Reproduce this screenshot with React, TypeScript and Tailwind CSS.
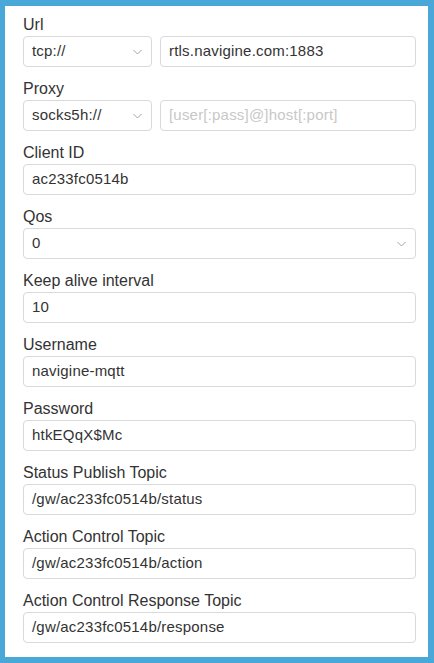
const font = { fontFamily: '"Liberation Sans", Arial, sans-serif' };

function Chevron() {
	return (
		<svg width="9" height="5" viewBox="0 0 9 5" className="absolute right-[9px] top-1/2 -translate-y-1/2" fill="none">
			<path d="M0.5 0.5 L4.5 4.5 L8.5 0.5" stroke="#a3a3a3" strokeWidth="1" />
		</svg>
	);
}

function Select({ value, className = "" }: { value: string; className?: string }) {
	return (
		<div
			className={`relative h-[31px] rounded-[4px] border border-[#d9d9d9] bg-white pl-[8px] flex items-center text-[15px] tracking-[0.2px] text-[#333] ${className}`}
		>
			{value}
			<Chevron />
		</div>
	);
}

function Input({ value, placeholder }: { value?: string; placeholder?: string }) {
	return (
		<div className="h-[31px] flex-1 rounded-[4px] border border-[#d9d9d9] bg-white pl-[8px] flex items-center text-[15px] tracking-[0.2px] text-[#333] whitespace-nowrap overflow-hidden">
			{value ? value : <span className="text-[#c8c8c8]">{placeholder}</span>}
		</div>
	);
}

function Field({ label, children }: { label: string; children: React.ReactNode }) {
	return (
		<div className="flex flex-col">
			<div className="h-[20px] leading-[20px] text-[16px] text-[#333] mb-[1px]">{label}</div>
			<div className="flex gap-[8px]">{children}</div>
		</div>
	);
}

export default function App() {
	return (
		<div className="w-[434px] h-[663px] bg-[#4aa8d8] pl-[5px] pt-[6px] pr-[6px] pb-[6px]" style={font}>
			<div className="w-full h-full bg-white pl-[18px] pr-[12px] pt-[9px] flex flex-col gap-[12px]">
				<Field label="Url">
					<Select value="tcp://" className="w-[129px]" />
					<Input value="rtls.navigine.com:1883" />
				</Field>
				<Field label="Proxy">
					<Select value="socks5h://" className="w-[129px]" />
					<Input placeholder="[user[:pass]@]host[:port]" />
				</Field>
				<Field label="Client ID">
					<Input value="ac233fc0514b" />
				</Field>
				<Field label="Qos">
					<Select value="0" className="flex-1" />
				</Field>
				<Field label="Keep alive interval">
					<Input value="10" />
				</Field>
				<Field label="Username">
					<Input value="navigine-mqtt" />
				</Field>
				<Field label="Password">
					<Input value="htkEQqX$Mc" />
				</Field>
				<Field label="Status Publish Topic">
					<Input value="/gw/ac233fc0514b/status" />
				</Field>
				<Field label="Action Control Topic">
					<Input value="/gw/ac233fc0514b/action" />
				</Field>
				<Field label="Action Control Response Topic">
					<Input value="/gw/ac233fc0514b/response" />
				</Field>
			</div>
		</div>
	);
}
